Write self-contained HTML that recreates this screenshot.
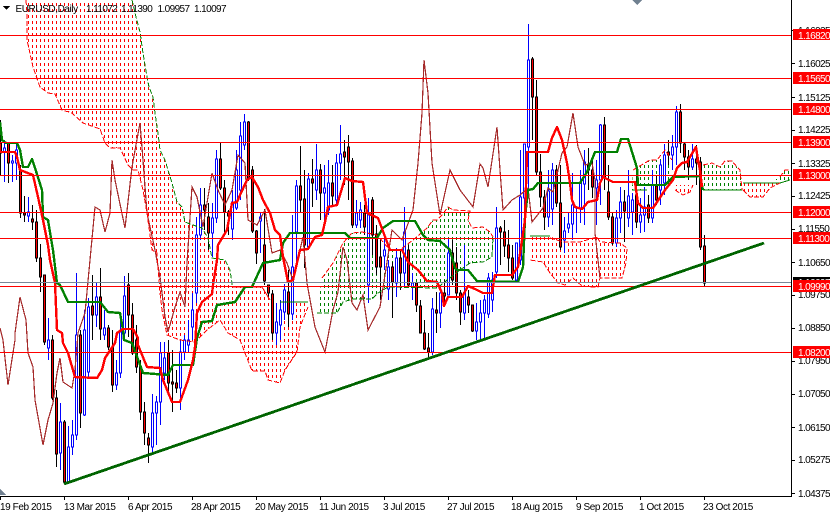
<!DOCTYPE html>
<html><head><meta charset="utf-8"><style>
html,body{margin:0;padding:0;background:#fff;width:830px;height:512px;overflow:hidden}
svg{display:block}
text{font-family:"Liberation Sans",sans-serif;font-size:10px;letter-spacing:-.6px;fill:#000}
.w{fill:#fff}
.d{letter-spacing:-.42px}
.e{stroke-dasharray:5 2}
</style></head><body>
<svg width="830" height="512" viewBox="0 0 830 512" shape-rendering="crispEdges">
<defs>
<pattern id="r" width="4" height="6" patternUnits="userSpaceOnUse"><rect x="0" y="3" width="1" height="3" fill="#f00"/></pattern>
<pattern id="g" width="4" height="6" patternUnits="userSpaceOnUse"><rect x="0" y="3" width="1" height="3" fill="#008000"/></pattern>
<clipPath id="c"><rect x="0" y="0" width="791" height="496"/></clipPath>
</defs>
<g clip-path="url(#c)">
<!-- clouds -->
<path fill="url(#r)" stroke="none" d="M26 0L27 13 27 40 33 67 40 87 48 93 55 94 62 110 72 113 83 123 100 129 105 143 110 148 120 148 128 165 133 170 138 170 143 190 147 213 152 250 157 253 160 293 162 310 167 335 180 340 195 342 207 330 220 320 228 333 240 340 245 353 252 371 265 371 268 380 280 383 285 370 297 352 300 327 308 307 308 302 280 302 270 300 262 287 232 287 232 283 230 270 225 260 212 258 208 238 202 228 193 225 185 222 182 207 177 202 172 183 168 170 165 160 160 150 158 133 155 113 153 97 149 87 147 77 143 53 140 32 136 17 132 0Z"/>
<path fill="url(#g)" stroke="none" d="M317 313L322 278 333 263 343 243 352 233 362 232 377 235 390 250 400 250 413 240 427 228 433 220 437 220 442 215 448 207 453 210 470 211 468 220 472 228 483 227 490 232 493 237 492 257 483 262 470 263 460 270 437 288 388 287 378 293 372 299 353 299 343 302 337 313 325 313Z"/>
<path fill="url(#r)" stroke="none" d="M530 236L550 236 563 242 580 242 597 237 600 242 620 243 627 248 626 263 622 278 600 278 598 287 592 287 582 286 573 278 565 285 558 283 550 273 543 262 530 260Z"/>
<path fill="url(#g)" stroke="none" d="M632 190L633 170 650 160 657 160 665 150 672 160 672 184 647 186 647 190Z"/>
<path fill="url(#r)" stroke="none" d="M675 190L683 195 690 192 693 185 675 185Z"/>
<path fill="url(#g)" stroke="none" d="M703 190L703 165 712 163 720 167 725 161 732 161 737 167 740 170 742 190Z"/>
<path fill="url(#r)" stroke="none" d="M743 183L770 183 780 183 770 188 763 197 750 197 743 190Z"/>
<path fill="url(#g)" stroke="none" d="M770 183L780 177 785 170 790 170 790 180 780 183Z"/>
<!-- blue candles: wicks then bodies -->
<path fill="none" stroke="#00f" d="M4.5 140V182M12.5 155V182M16.5 143V180M28.5 197V222M48.5 318V360M60.5 403V470M68.5 426V484M72.5 420V455M76.5 273V440M84.5 310V416M88.5 298V378M96.5 282V327M104.5 310V340M116.5 360V390M120.5 320V378M124.5 276V340M152.5 394V455M156.5 396V445M160.5 342V425M164.5 342V380M180.5 340V410M184.5 335V360M188.5 320V352M192.5 293V340M196.5 217V303M200.5 188V240M212.5 203V257M216.5 150V223M232.5 190V240M236.5 150V210M240.5 122V200M244.5 114V150M260.5 212V253M276.5 303V345M280.5 300V340M284.5 284V320M292.5 215V320M296.5 180V267M308.5 173V250M316.5 144V200M324.5 165V222M328.5 160V215M336.5 154V205M340.5 125V180M356.5 200V228M360.5 202V228M368.5 198V303M384.5 235V270M388.5 260V300M396.5 248V297M404.5 207V287M412.5 273V300M432.5 298V355M440.5 285V328M448.5 238V295M464.5 245V320M476.5 303V340M480.5 300V340M484.5 295V340M488.5 273V318M492.5 272V312M496.5 207V278M516.5 243V282M520.5 150V265M524.5 144V240M528.5 24V190M548.5 170V227M552.5 163V225M564.5 217V253M568.5 213V233M572.5 173V240M576.5 208V233M580.5 170V223M584.5 150V225M596.5 160V225M600.5 124V205M616.5 210V247M620.5 187V233M628.5 170V227M632.5 193V235M640.5 198V233M644.5 187V232M652.5 170V223M660.5 160V205M664.5 144V195M672.5 135V170M676.5 106V165M692.5 144V170"/>
<path fill="#fff" stroke="#00f" d="M3.5 148h2V152h-2zM11.5 161h2V163h-2zM15.5 150h2V163h-2zM27.5 212h2V216h-2zM47.5 340h2V348h-2zM59.5 422h2V453h-2zM67.5 447h2V482h-2zM71.5 435h2V447h-2zM75.5 335h2V435h-2zM83.5 330h2V415h-2zM87.5 307h2V372h-2zM95.5 297h2V315h-2zM103.5 328h2V335h-2zM115.5 373h2V385h-2zM119.5 332h2V373h-2zM123.5 296h2V333h-2zM151.5 413h2V447h-2zM155.5 402h2V413h-2zM159.5 353h2V402h-2zM163.5 358h2V373h-2zM179.5 352h2V388h-2zM183.5 340h2V352h-2zM187.5 340h2V345h-2zM191.5 310h2V327h-2zM195.5 235h2V293h-2zM199.5 205h2V235h-2zM211.5 218h2V233h-2zM215.5 159h2V218h-2zM231.5 202h2V229h-2zM235.5 170h2V208h-2zM239.5 136h2V190h-2zM243.5 122h2V145h-2zM259.5 217h2V221h-2zM275.5 322h2V333h-2zM279.5 310h2V325h-2zM283.5 290h2V312h-2zM291.5 267h2V314h-2zM295.5 186h2V232h-2zM307.5 179h2V247h-2zM315.5 170h2V190h-2zM323.5 188h2V193h-2zM327.5 183h2V210h-2zM335.5 163h2V200h-2zM339.5 154h2V163h-2zM355.5 213h2V225h-2zM359.5 210h2V220h-2zM367.5 215h2V285h-2zM383.5 250h2V256h-2zM387.5 267h2V289h-2zM395.5 258h2V283h-2zM403.5 232h2V273h-2zM411.5 283h2V287h-2zM431.5 309h2V352h-2zM439.5 293h2V313h-2zM447.5 253h2V295h-2zM463.5 293h2V313h-2zM475.5 322h2V331h-2zM479.5 313h2V322h-2zM483.5 300h2V313h-2zM487.5 278h2V314h-2zM491.5 280h2V300h-2zM495.5 228h2V272h-2zM515.5 243h2V280h-2zM519.5 197h2V260h-2zM523.5 144h2V198h-2zM527.5 60h2V147h-2zM547.5 191h2V217h-2zM551.5 170h2V209h-2zM563.5 231h2V240h-2zM567.5 224h2V228h-2zM571.5 205h2V224h-2zM579.5 183h2V208h-2zM583.5 162h2V184h-2zM595.5 180h2V188h-2zM599.5 125h2V180h-2zM615.5 218h2V243h-2zM619.5 202h2V218h-2zM627.5 196h2V218h-2zM631.5 200h2V212h-2zM639.5 215h2V222h-2zM643.5 207h2V215h-2zM651.5 185h2V218h-2zM659.5 165h2V190h-2zM663.5 155h2V183h-2zM671.5 147h2V155h-2zM675.5 112h2V147h-2zM691.5 159h2V167h-2z"/>
<!-- down candles -->
<path fill="none" stroke="#000" d="M0.5 120V175M8.5 142V183M20.5 165V218M24.5 196V222M32.5 205V230M36.5 210V262M40.5 244V292M44.5 275V345M52.5 335V400M56.5 390V467M64.5 420V483M80.5 330V428M92.5 275V340M100.5 268V340M108.5 325V350M112.5 330V392M128.5 273V337M132.5 303V355M136.5 325V373M140.5 360V420M144.5 402V445M148.5 433V463M168.5 340V395M172.5 350V412M176.5 370V393M204.5 188V230M208.5 203V250M220.5 143V190M224.5 180V235M228.5 210V235M248.5 121V181M252.5 166V233M256.5 230V264M264.5 209V285M268.5 285V298M272.5 290V340M288.5 270V327M300.5 146V213M304.5 170V268M312.5 159V207M320.5 164V220M332.5 165V205M344.5 140V185M348.5 135V200M352.5 158V228M364.5 205V235M372.5 197V255M376.5 225V275M380.5 240V300M392.5 262V318M400.5 250V290M408.5 245V288M416.5 283V312M420.5 300V333M424.5 320V350M428.5 333V357M436.5 292V333M444.5 280V307M452.5 240V285M456.5 247V300M460.5 290V325M468.5 290V313M472.5 305V332M500.5 226V265M504.5 220V257M508.5 230V272M512.5 245V280M532.5 57V140M536.5 80V175M540.5 154V207M544.5 190V230M556.5 165V207M560.5 165V250M588.5 148V190M592.5 160V198M604.5 117V190M608.5 165V220M612.5 212V245M624.5 190V242M636.5 170V228M648.5 195V223M656.5 175V205M668.5 140V165M680.5 104V153M684.5 142V170M688.5 150V180M696.5 145V185M700.5 157V250M704.5 235V287"/>
<path fill="#f00" stroke="#000" d="M-.5 143h2V153h-2zM7.5 143h2V163h-2zM19.5 170h2V213h-2zM23.5 213h2V215h-2zM31.5 219h2V222h-2zM35.5 222h2V258h-2zM39.5 258h2V277h-2zM43.5 275h2V342h-2zM51.5 340h2V398h-2zM55.5 398h2V454h-2zM63.5 422h2V482h-2zM79.5 335h2V413h-2zM91.5 306h2V315h-2zM99.5 297h2V329h-2zM107.5 328h2V347h-2zM111.5 347h2V385h-2zM127.5 285h2V315h-2zM131.5 315h2V353h-2zM135.5 340h2V367h-2zM139.5 367h2V412h-2zM143.5 412h2V433h-2zM147.5 438h2V445h-2zM167.5 353h2V383h-2zM171.5 382h2V384h-2zM175.5 383h2V388h-2zM203.5 205h2V210h-2zM207.5 217h2V233h-2zM219.5 159h2V188h-2zM223.5 188h2V212h-2zM227.5 212h2V216h-2zM247.5 122h2V178h-2zM251.5 170h2V231h-2zM255.5 231h2V253h-2zM263.5 245h2V281h-2zM267.5 285h2V293h-2zM271.5 294h2V333h-2zM287.5 292h2V314h-2zM299.5 186h2V200h-2zM303.5 199h2V245h-2zM311.5 179h2V183h-2zM319.5 170h2V193h-2zM331.5 183h2V196h-2zM343.5 152h2V157h-2zM347.5 147h2V162h-2zM351.5 161h2V225h-2zM363.5 213h2V227h-2zM371.5 200h2V235h-2zM375.5 234h2V267h-2zM379.5 257h2V267h-2zM391.5 267h2V282h-2zM399.5 258h2V273h-2zM407.5 250h2V285h-2zM415.5 283h2V305h-2zM419.5 306h2V333h-2zM423.5 333h2V349h-2zM427.5 348h2V352h-2zM435.5 310h2V313h-2zM443.5 293h2V296h-2zM451.5 253h2V280h-2zM455.5 263h2V293h-2zM459.5 293h2V312h-2zM467.5 297h2V305h-2zM471.5 305h2V331h-2zM499.5 228h2V232h-2zM503.5 232h2V246h-2zM507.5 245h2V258h-2zM511.5 258h2V278h-2zM531.5 59h2V97h-2zM535.5 97h2V172h-2zM539.5 172h2V197h-2zM543.5 197h2V217h-2zM555.5 170h2V203h-2zM559.5 203h2V247h-2zM587.5 165h2V170h-2zM591.5 170h2V187h-2zM603.5 125h2V178h-2zM607.5 192h2V217h-2zM611.5 217h2V243h-2zM623.5 202h2V211h-2zM635.5 195h2V222h-2zM647.5 205h2V218h-2zM655.5 186h2V200h-2zM667.5 152h2V155h-2zM679.5 112h2V143h-2zM683.5 144h2V157h-2zM687.5 157h2V167h-2zM695.5 159h2V163h-2zM699.5 162h2V247h-2zM703.5 246h2V283h-2z"/>
<!-- chikou -->
<polyline fill="none" stroke="#a52a2a" stroke-width="1.2" points="0,328 3,340 8,385 15,340 15,333 20,297 26,320 28,353 33,367 35,400 43,445 48,420 53,403 57,373 60,358 63,382 72,388 75,370 78,333 85,313 90,260 95,207 100,210 105,232 110,213 112,160 115,180 125,228 132,167 140,123 143,160 147,213 155,250 160,277 165,317 168,332 175,307 180,292 185,307 187,263 192,187 197,197 203,227 212,173 218,190 225,205 232,190 238,155 245,163 248,220 257,225 265,210 272,253 280,250 287,263 293,280 303,237 307,283 315,327 325,352 333,310 338,292 343,247 347,260 352,303 357,310 363,295 368,330 380,307 392,230 402,240 413,210 418,163 422,113 424,60 428,93 432,163 440,215 450,170 460,190 473,207 480,164 483,168 488,187 497,127 500,170 503,210 512,200 520,195 528,188 532,222 543,208 548,188 553,192 562,153 567,147 573,113 578,147 585,165 592,163 595,180 595,233 600,278"/>
<!-- cloud edges -->
<polyline class="e" fill="none" stroke="#f00" points="26,0 27,13 27,40 33,67 40,87 48,93 55,94 62,110 72,113 83,123 100,129 105,143 110,148 120,148 128,165 133,170 138,170 143,190 147,213 152,250 157,253 160,293 162,310 167,335 180,340 195,342 207,330 220,320 228,333 240,340 245,353 252,371 265,371 268,380 280,383 285,370 297,352 300,327 308,307"/>
<polyline class="e" fill="none" stroke="#008000" points="132,0 136,17 140,32 143,53 147,77 149,87 153,97 155,113 158,133 160,150 165,160 168,170 172,183 177,202 182,207 185,222 193,225 202,228 208,238 212,258 225,260 230,270 232,283 232,287"/>
<polyline fill="none" stroke="#f00" points="232,287 262,287 270,300"/>
<polyline fill="none" stroke="#008000" points="280,302 308,302"/>
<polyline class="e" fill="none" stroke="#f00" points="322,278 333,263 343,243 352,233 362,232 377,235 390,250 400,250 413,240 427,228 433,220 437,220 442,215 448,207 453,210 470,211 468,220 472,228 483,227 490,232 493,237"/>
<polyline class="e" fill="none" stroke="#008000" points="317,313 325,313 337,313 343,302 353,299 372,299 378,293 388,287 437,288 460,270 470,263 483,262 492,257 493,237"/>
<polyline fill="none" stroke="#008000" points="530,236 550,236"/>
<polyline class="e" fill="none" stroke="#f00" points="550,238 563,242 580,242 597,237 600,242 620,243 627,248 626,263 622,278 600,278 598,287 592,287 582,286 573,278 565,285 558,283 550,273 543,262 530,260"/>
<polyline fill="none" stroke="#008000" points="632,190 647,190"/>
<polyline class="e" fill="none" stroke="#f00" points="633,170 650,160 657,160 665,150 672,160"/>
<polyline class="e" fill="none" stroke="#f00" points="675,190 683,195 690,192 693,185"/>
<polyline class="e" fill="none" stroke="#f00" points="703,165 712,163 720,167 725,161 732,161 737,167 740,170 742,190"/>
<polyline fill="none" stroke="#008000" points="703,190 742,190"/>
<polyline fill="none" stroke="#008000" points="743,183 770,183 780,183 790,180"/>
<polyline class="e" fill="none" stroke="#f00" points="743,190 750,197 763,197 770,188 780,183"/>
<polyline class="e" fill="none" stroke="#f00" points="780,177 785,170 790,170"/>
<!-- kijun -->
<polyline fill="none" stroke="#008000" stroke-width="2.4" stroke-linejoin="round" points="0,122 2,140 6,143 17,143 20,150 23,167 28,167 32,159 35,168 42,190 43,217 48,220 53,250 57,283 60,285 68,302 100,302 108,312 120,313 123,330 124,340 132,343 143,373 168,375 173,365 193,365 197,338 202,322 212,321 217,305 235,302 245,287 252,287 263,263 280,260 283,243 290,233 345,233 350,238 377,238 383,228 393,221 415,221 423,235 428,240 440,241 450,250 455,268 457,270 468,270 477,281 518,282 523,267 525,217 528,190 533,189 538,183 580,183 587,172 595,152 617,152 621,139 628,139 637,168 638,185 665,185 673,177 700,176 703,190"/>
<!-- tenkan -->
<polyline fill="none" stroke="#f00" stroke-width="2.4" stroke-linejoin="round" points="0,152 15,152 17,157 20,170 33,175 38,197 43,220 48,245 50,260 55,283 57,330 62,333 63,343 68,353 75,377 97,378 102,370 105,358 115,343 117,333 123,329 133,329 138,338 138,345 147,367 160,368 163,380 172,402 180,402 188,380 193,360 195,347 197,313 202,302 212,294 213,285 217,260 218,245 227,230 232,203 237,202 240,195 247,180 252,177 258,187 263,200 270,213 275,230 280,235 283,257 288,282 293,280 300,250 308,249 315,237 322,235 325,222 328,207 337,205 345,178 352,181 363,182 367,213 378,218 390,250 402,250 408,262 418,270 427,281 437,282 442,293 444,306 448,297 462,297 468,286 475,289 483,293 492,293 495,275 512,275 518,267 525,220 527,152 548,152 552,138 557,127 562,140 567,163 570,183 572,200 575,207 582,209 588,202 597,200 600,183 603,177 613,182 635,182 638,203 643,208 653,208 665,190 673,180 677,168 682,163 687,162 696,147 698,160 700,170 702,187"/>
<!-- horizontal lines -->
<path fill="none" stroke="#778899" d="M0 282.5H791"/>
<path fill="none" stroke="#f00" d="M0 35.5H791M0 78.5H791M0 109.5H791M0 142.5H791M0 175.5H791M0 212.5H791M0 238.5H791M0 286.5H791M0 352.5H791"/>
<!-- trendline -->
<line x1="64" y1="484" x2="764" y2="243" stroke="#006400" stroke-width="2.8"/>
</g>
<!-- axes -->
<path fill="none" stroke="#000" d="M791.5 0V497M0 496.5H792M792 63.5h3M792 97.5h3M792 130.5h3M792 163.5h3M792 196.5h3M792 229.5h3M792 262.5h3M792 295.5h3M792 328.5h3M792 361.5h3M792 394.5h3M792 427.5h3M792 460.5h3M792 493.5h3M792 30.5h3M0.5 497v3M64.5 497v3M128.5 497v3M192.5 497v3M256.5 497v3M320.5 497v3M384.5 497v3M448.5 497v3M512.5 497v3M576.5 497v3M640.5 497v3M704.5 497v3"/>
<!-- corner marks -->
<polygon points="0,489 6,495 0,495" fill="#708090"/>
<polygon points="632,0 642,0 637,5" fill="#708090"/>
<polygon points="3,6 10,6 6.5,10" fill="#000"/>
<!-- header text -->
<text y="12" x="15.5" class="d">EURUSD,Daily</text>
<text y="12" x="86">1.11072</text>
<text y="12" x="121">1.11390</text>
<text y="12" x="157.5">1.09957</text>
<text y="12" x="194">1.10097</text>
<!-- right axis labels -->
<text x="798" y="67">1.16025</text>
<text x="798" y="101">1.15125</text>
<text x="798" y="133">1.14225</text>
<text x="798" y="167">1.13325</text>
<text x="798" y="199">1.12425</text>
<text x="798" y="232">1.11550</text>
<text x="798" y="266">1.10650</text>
<text x="798" y="298">1.09750</text>
<text x="798" y="331">1.08850</text>
<text x="798" y="364">1.07950</text>
<text x="798" y="397">1.07050</text>
<text x="798" y="431">1.06150</text>
<text x="798" y="463">1.05275</text>
<text x="798" y="497">1.04375</text>
<text x="798" y="34">1.16925</text>
<!-- tags -->
<rect x="793" y="277" width="37" height="11" fill="#000"/>
<text class="w" x="798" y="286">1.10097</text>
<rect x="793" y="29" width="37" height="11" fill="#f00"/><text class="w" x="798" y="39">1.16820</text>
<rect x="793" y="72" width="37" height="12" fill="#f00"/><text class="w" x="798" y="82">1.15650</text>
<rect x="793" y="103" width="37" height="12" fill="#f00"/><text class="w" x="798" y="113">1.14800</text>
<rect x="793" y="136" width="37" height="12" fill="#f00"/><text class="w" x="798" y="146">1.13900</text>
<rect x="793" y="169" width="37" height="12" fill="#f00"/><text class="w" x="798" y="179">1.13000</text>
<rect x="793" y="206" width="37" height="12" fill="#f00"/><text class="w" x="798" y="216">1.12000</text>
<rect x="793" y="232" width="37" height="12" fill="#f00"/><text class="w" x="798" y="242">1.11300</text>
<rect x="793" y="280" width="37" height="12" fill="#f00"/><text class="w" x="798" y="290">1.09990</text>
<rect x="793" y="346" width="37" height="12" fill="#f00"/><text class="w" x="798" y="356">1.08200</text>
<!-- bottom labels -->
<g class="x">
<text class="d" x="0" y="510">19 Feb 2015</text>
<text class="d" x="64" y="510">13 Mar 2015</text>
<text class="d" x="128" y="510">6 Apr 2015</text>
<text class="d" x="191" y="510">28 Apr 2015</text>
<text class="d" x="255" y="510">20 May 2015</text>
<text class="d" x="319" y="510">11 Jun 2015</text>
<text class="d" x="383" y="510">3 Jul 2015</text>
<text class="d" x="447" y="510">27 Jul 2015</text>
<text class="d" x="511" y="510">18 Aug 2015</text>
<text class="d" x="576" y="510">9 Sep 2015</text>
<text class="d" x="639" y="510">1 Oct 2015</text>
<text class="d" x="703" y="510">23 Oct 2015</text>
</g>
</svg>
</body></html>
